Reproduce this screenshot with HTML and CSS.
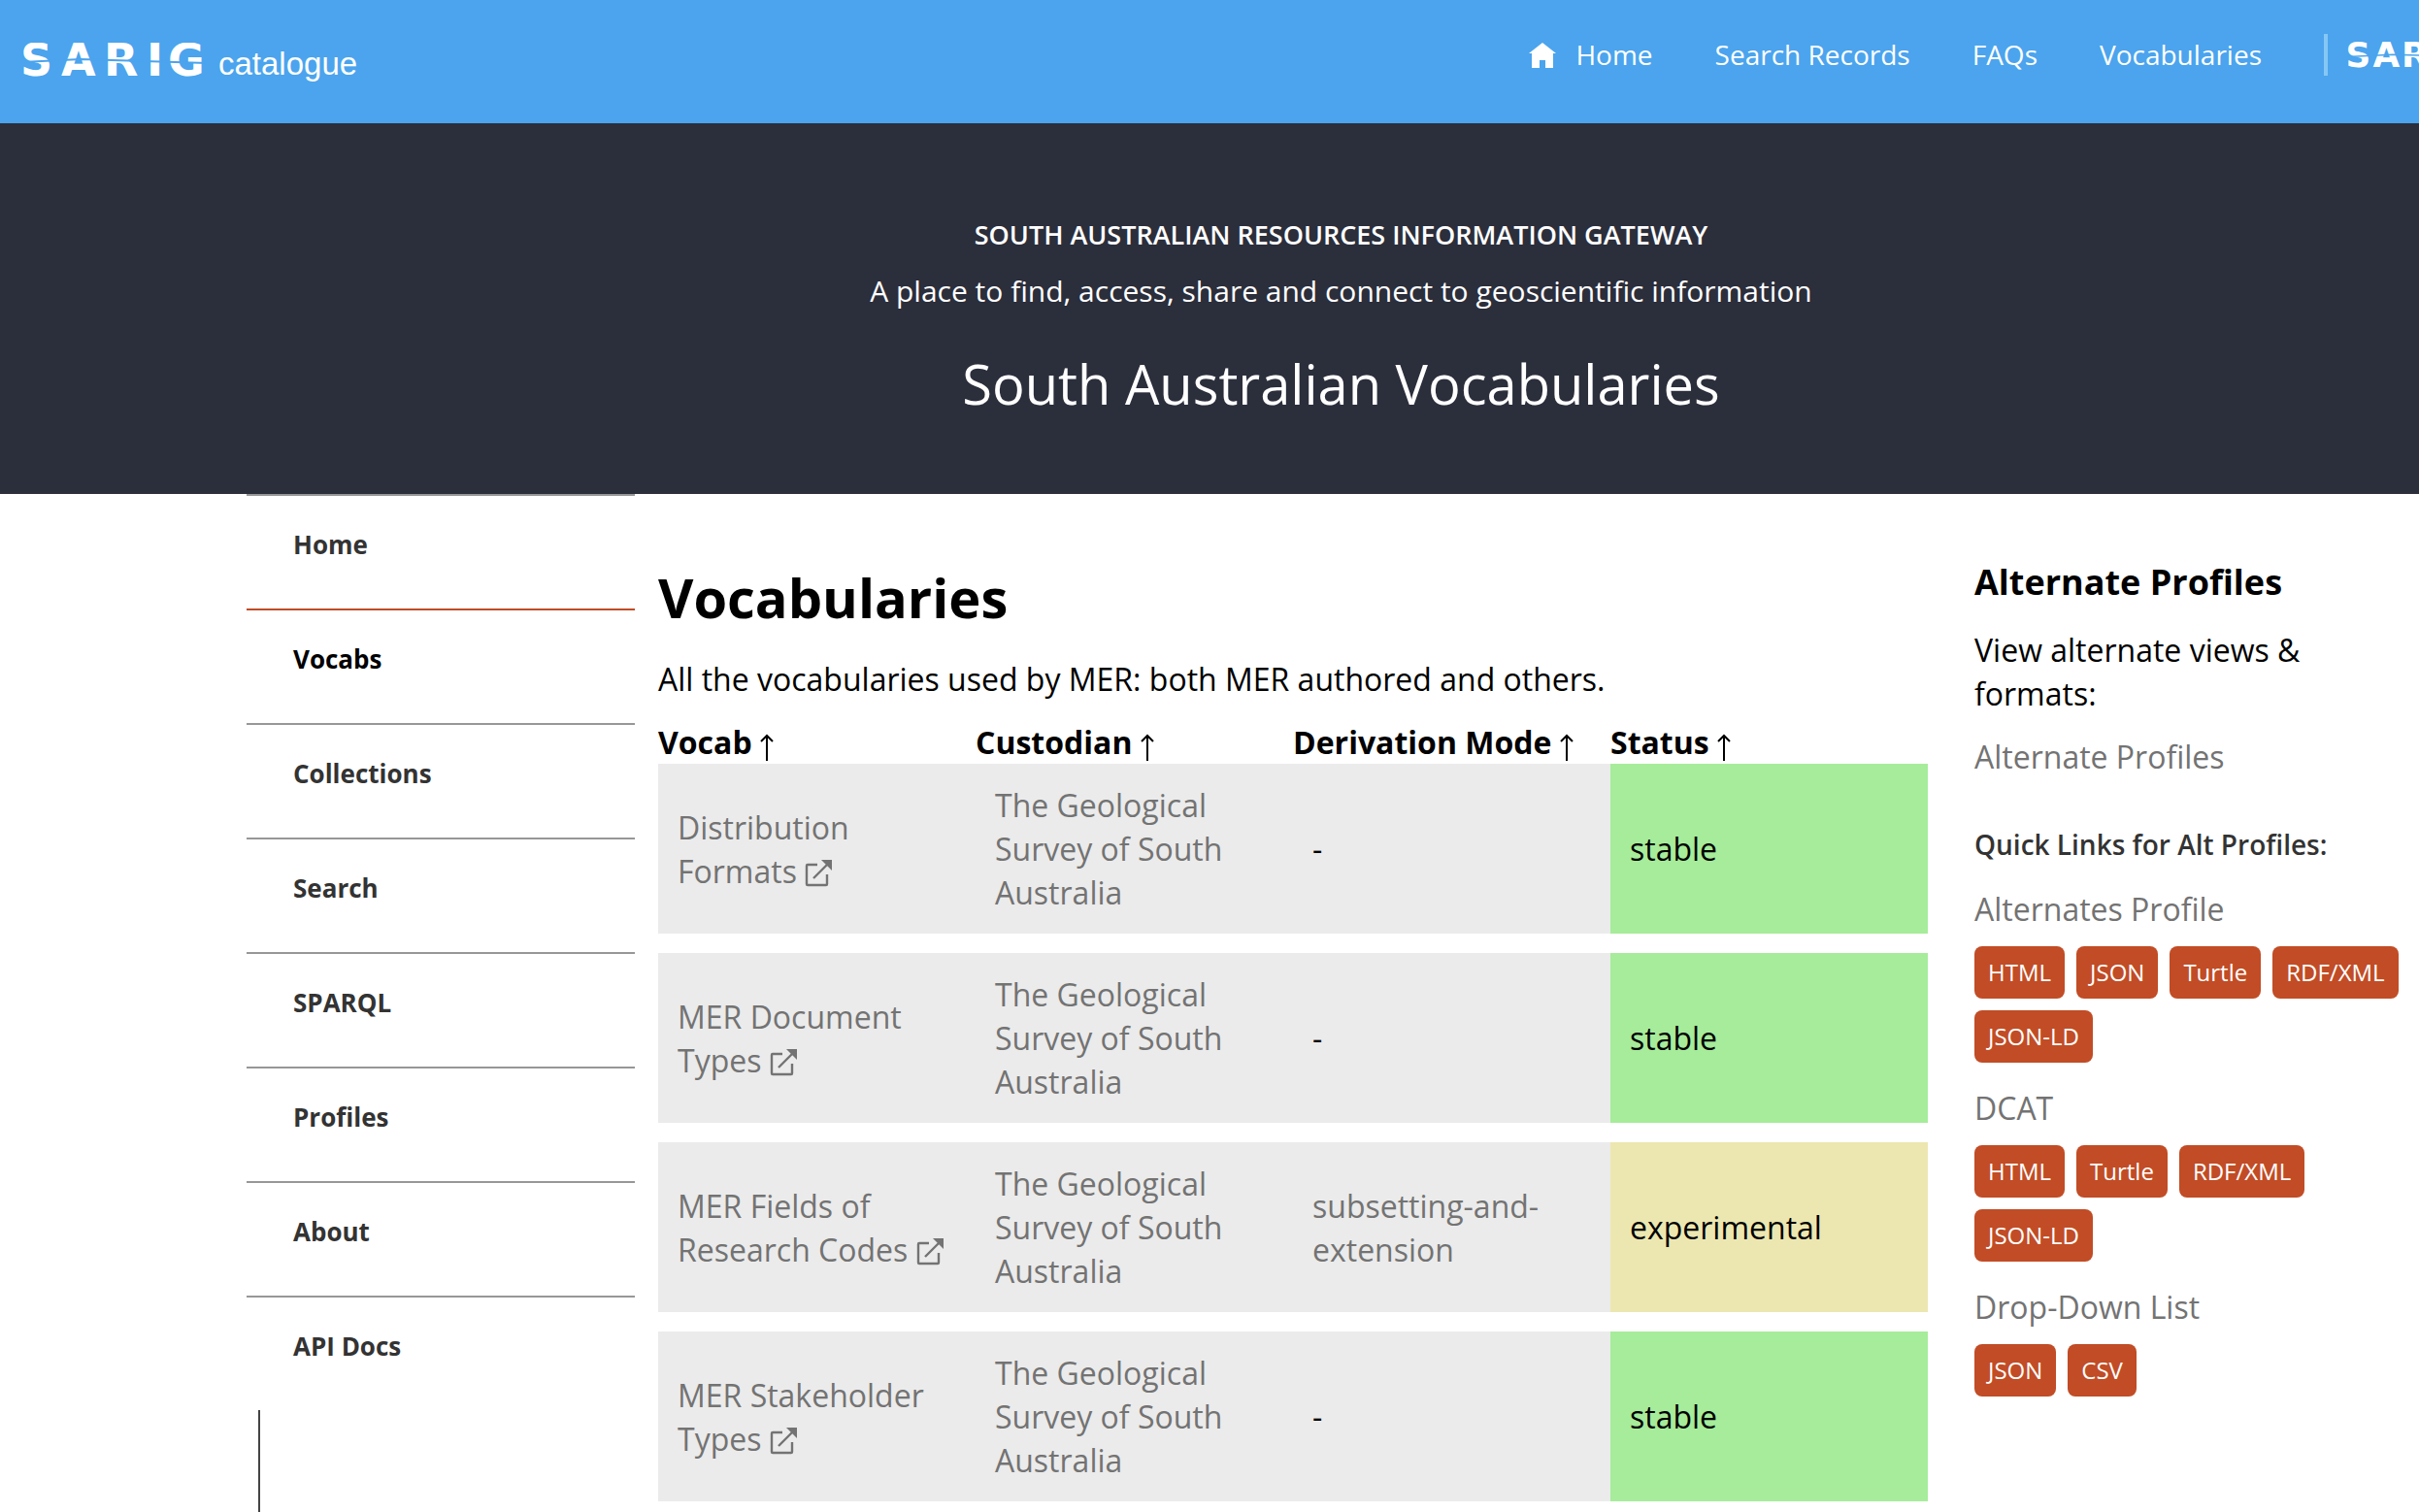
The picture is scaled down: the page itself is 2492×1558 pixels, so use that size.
FILE: index.html
```html
<!DOCTYPE html>
<html lang="en">
<head>
    <meta charset="UTF-8">
    <meta name="viewport" content="width=device-width, initial-scale=1.0">
    <title>South Australian Vocabularies</title>
    <link rel="stylesheet" href="styles.css">
</head>
<body>
    <!-- shared icons -->
    <svg class="sprite" aria-hidden="true">
        <symbol id="arrow-up" viewBox="0 0 14 28">
            <path d="M7 28V2M1 8L7 2L13 8" fill="none" stroke="currentColor" stroke-width="2"/>
        </symbol>
        <symbol id="external" viewBox="0 0 28 28">
            <path d="M13 5H3Q2 5 2 6V25Q2 26 3 26H22Q23 26 23 25V15M9 19L25 3" fill="none" stroke="currentColor" stroke-width="2.4"/>
            <path d="M17 0H28V11L24 7L21 4Z" fill="currentColor"/>
        </symbol>
    </svg>

    <header class="header">
        <a href="#" class="logo" aria-label="SARIG catalogue">
            <svg class="logo-mark" viewBox="0 0 190 36">
                <g class="wordmark">
                    <text x="-2" y="34">S</text>
                    <text x="40" y="34">A</text>
                    <text x="84" y="34">R</text>
                    <text x="128" y="34">I</text>
                    <text x="150" y="34">G</text>
                </g>
                <path d="M0 20L60 17L190 21" fill="none" stroke="#4ba4ed" stroke-width="2"/>
            </svg>
            <span class="logo-text">catalogue</span>
        </a>
        <nav class="top-nav">
            <a href="#">
                <svg class="home-icon" viewBox="0 0 28 26"><path d="M14 0L28 11H25V26H17V18H11V26H3V11H0Z" fill="currentColor"/></svg>
                Home
            </a>
            <a href="#">Search Records</a>
            <a href="#">FAQs</a>
            <a href="#">Vocabularies</a>
            <a href="#" class="sarig-link" aria-label="SARIG">
                <svg viewBox="0 0 190 36">
                    <g class="wordmark">
                        <text x="-2" y="34">S</text>
                        <text x="34" y="34">A</text>
                        <text x="72" y="34">R</text>
                    </g>
                    <path d="M0 20L60 17L190 21" fill="none" stroke="#4ba4ed" stroke-width="2"/>
                </svg>
            </a>
        </nav>
    </header>

    <section class="hero">
        <p class="hero-name">SOUTH AUSTRALIAN RESOURCES INFORMATION GATEWAY</p>
        <p class="hero-tagline">A place to find, access, share and connect to geoscientific information</p>
        <p class="hero-title">South Australian Vocabularies</p>
    </section>

    <div class="page">
        <div class="sidebar">
            <nav class="side-nav">
                <a href="#">Home</a>
                <a href="#" class="active">Vocabs</a>
                <a href="#">Collections</a>
                <a href="#">Search</a>
                <a href="#">SPARQL</a>
                <a href="#">Profiles</a>
                <a href="#">About</a>
                <a href="#">API Docs</a>
            </nav>
            <div class="side-line"></div>
        </div>

        <main class="content">
            <h1>Vocabularies</h1>
            <p>All the vocabularies used by MER: both MER authored and others.</p>
            <table class="vocabs">
                <thead>
                    <tr>
                        <th>Vocab <svg class="sort"><use href="#arrow-up"/></svg></th>
                        <th>Custodian <svg class="sort"><use href="#arrow-up"/></svg></th>
                        <th>Derivation Mode <svg class="sort"><use href="#arrow-up"/></svg></th>
                        <th>Status <svg class="sort"><use href="#arrow-up"/></svg></th>
                    </tr>
                </thead>
                <tbody>
                    <tr>
                        <td><a href="#">Distribution Formats <svg class="external"><use href="#external"/></svg></a></td>
                        <td><a href="#">The Geological Survey of South Australia</a></td>
                        <td>-</td>
                        <td class="stable">stable</td>
                    </tr>
                    <tr>
                        <td><a href="#">MER Document Types <svg class="external"><use href="#external"/></svg></a></td>
                        <td><a href="#">The Geological Survey of South Australia</a></td>
                        <td>-</td>
                        <td class="stable">stable</td>
                    </tr>
                    <tr>
                        <td><a href="#">MER Fields of Research Codes <svg class="external"><use href="#external"/></svg></a></td>
                        <td><a href="#">The Geological Survey of South Australia</a></td>
                        <td><a href="#">subsetting-and-extension</a></td>
                        <td class="experimental">experimental</td>
                    </tr>
                    <tr>
                        <td><a href="#">MER Stakeholder Types <svg class="external"><use href="#external"/></svg></a></td>
                        <td><a href="#">The Geological Survey of South Australia</a></td>
                        <td>-</td>
                        <td class="stable">stable</td>
                    </tr>
                </tbody>
            </table>
        </main>

        <aside class="profiles">
            <h2>Alternate Profiles</h2>
            <p>View alternate views &amp; formats:</p>
            <a href="#" class="profile-link">Alternate Profiles</a>
            <h3>Quick Links for Alt Profiles:</h3>
            <div class="profile">
                <a href="#" class="profile-link">Alternates Profile</a>
                <div class="formats">
                    <a href="#">HTML</a>
                    <a href="#">JSON</a>
                    <a href="#">Turtle</a>
                    <a href="#">RDF/XML</a>
                    <a href="#">JSON-LD</a>
                </div>
            </div>
            <div class="profile">
                <a href="#" class="profile-link">DCAT</a>
                <div class="formats">
                    <a href="#">HTML</a>
                    <a href="#">Turtle</a>
                    <a href="#">RDF/XML</a>
                    <a href="#">JSON-LD</a>
                </div>
            </div>
            <div class="profile">
                <a href="#" class="profile-link">Drop-Down List</a>
                <div class="formats">
                    <a href="#">JSON</a>
                    <a href="#">CSV</a>
                </div>
            </div>
        </aside>
    </div>
</body>
</html>
```
FILE: styles.css
```css
* {
    box-sizing: border-box;
}
body {
    font-family: "Open Sans", sans-serif;
    font-size: 32px;
    line-height: 45px;
    color: #000;
    background-color: #fff;
    margin: 0;
    display: flex;
    flex-direction: column;
    min-height: 100vh;
}
h1, h2, h3, p {
    margin: 0;
}
a {
    color: #737373;
    text-decoration: none;
}
.sprite {
    position: absolute;
    width: 0;
    height: 0;
}
.wordmark {
    font-family: "DejaVu Sans", sans-serif;
    font-size: 46px;
    font-weight: bold;
    fill: #fff;
}

/* header */
.header {
    display: flex;
    justify-content: space-between;
    align-items: flex-start;
    background-color: #4ba4ed;
    padding: 35px 0 39px 23px;
}
.header a {
    color: #fff;
}
.logo {
    display: flex;
    align-items: center;
    gap: 12px;
}
.logo-mark {
    width: 190px;
    height: 36px;
}
.logo-text {
    font-family: "Liberation Sans", sans-serif;
    font-size: 33px;
    padding-top: 8px;
}
.top-nav {
    display: flex;
    align-items: center;
    gap: 64px;
    font-size: 28px;
    line-height: 43px;
}
.top-nav a {
    display: flex;
    align-items: center;
    gap: 20px;
}
.home-icon {
    width: 28px;
    height: 26px;
}
.top-nav .sarig-link {
    width: 98px;
    height: 43px;
    overflow: hidden;
    border-left: 4px solid #85c7f5;
    padding-left: 20px;
}
.sarig-link svg {
    flex: none;
    width: 148px;
    height: 28px;
}

/* hero */
.hero {
    background-color: #2b2e3b;
    color: #fff;
    text-align: center;
    padding: 96px 0 73px 271px;
}
.hero-name {
    font-size: 27px;
    font-weight: 600;
    line-height: 38px;
}
.hero-tagline {
    font-size: 30px;
    margin: 16px 0 32px;
}
.hero-title {
    font-size: 56px;
    line-height: 82px;
}

/* layout */
.page {
    flex: 1;
    display: grid;
    grid-template-columns: 400px 1fr 470px;
    padding: 0 12px 0 254px;
}
.sidebar {
    display: flex;
    flex-direction: column;
}
.side-nav a {
    display: block;
    border-top: 2px solid #979797;
    padding: 32px 48px 48px;
    font-size: 26px;
    font-weight: bold;
    line-height: 36px;
    color: #333;
}
.side-nav .active {
    border-color: #c14c25;
    color: #000;
}
.side-line {
    flex: 1;
    margin-left: 12px;
    border-left: 2px solid #444;
}

/* vocab list */
.content {
    padding: 67px 24px 0;
}
.content h1 {
    font-size: 56px;
    line-height: 78px;
    margin-bottom: 23px;
}
.vocabs {
    width: 100%;
    margin-top: 20px;
    table-layout: fixed;
    border-spacing: 0;
}
.vocabs th {
    padding: 0;
    text-align: left;
    white-space: nowrap;
}
.vocabs td {
    padding: 20px;
    background-color: #ebebeb;
    background-clip: padding-box;
    border-bottom: 20px solid #fff;
}
.vocabs tr:last-child td {
    border-bottom: 0;
}
.vocabs .stable {
    background-color: #a6ec9a;
}
.vocabs .experimental {
    background-color: #ece7b0;
}
.sort {
    width: 14px;
    height: 28px;
    vertical-align: -7px;
}
.external {
    width: 28px;
    height: 28px;
    vertical-align: -4px;
}

/* alternate profiles */
.profiles {
    padding: 66px 0 0 24px;
}
.profiles h2 {
    font-size: 36px;
    line-height: 50px;
    margin-bottom: 22px;
}
.profiles h3 {
    font-size: 28px;
    font-weight: 600;
    line-height: 40px;
    color: #333;
    margin: 48px 0 24px;
}
.profiles p {
    margin-bottom: 20px;
}
.profile-link {
    display: block;
}
.profile {
    margin-bottom: 24px;
}
.formats {
    display: flex;
    flex-wrap: wrap;
    gap: 12px;
    margin-top: 16px;
}
.formats a {
    background-color: #c14c25;
    color: #fff;
    font-size: 24px;
    line-height: 34px;
    padding: 10px 14px;
    border-radius: 8px;
}
```
